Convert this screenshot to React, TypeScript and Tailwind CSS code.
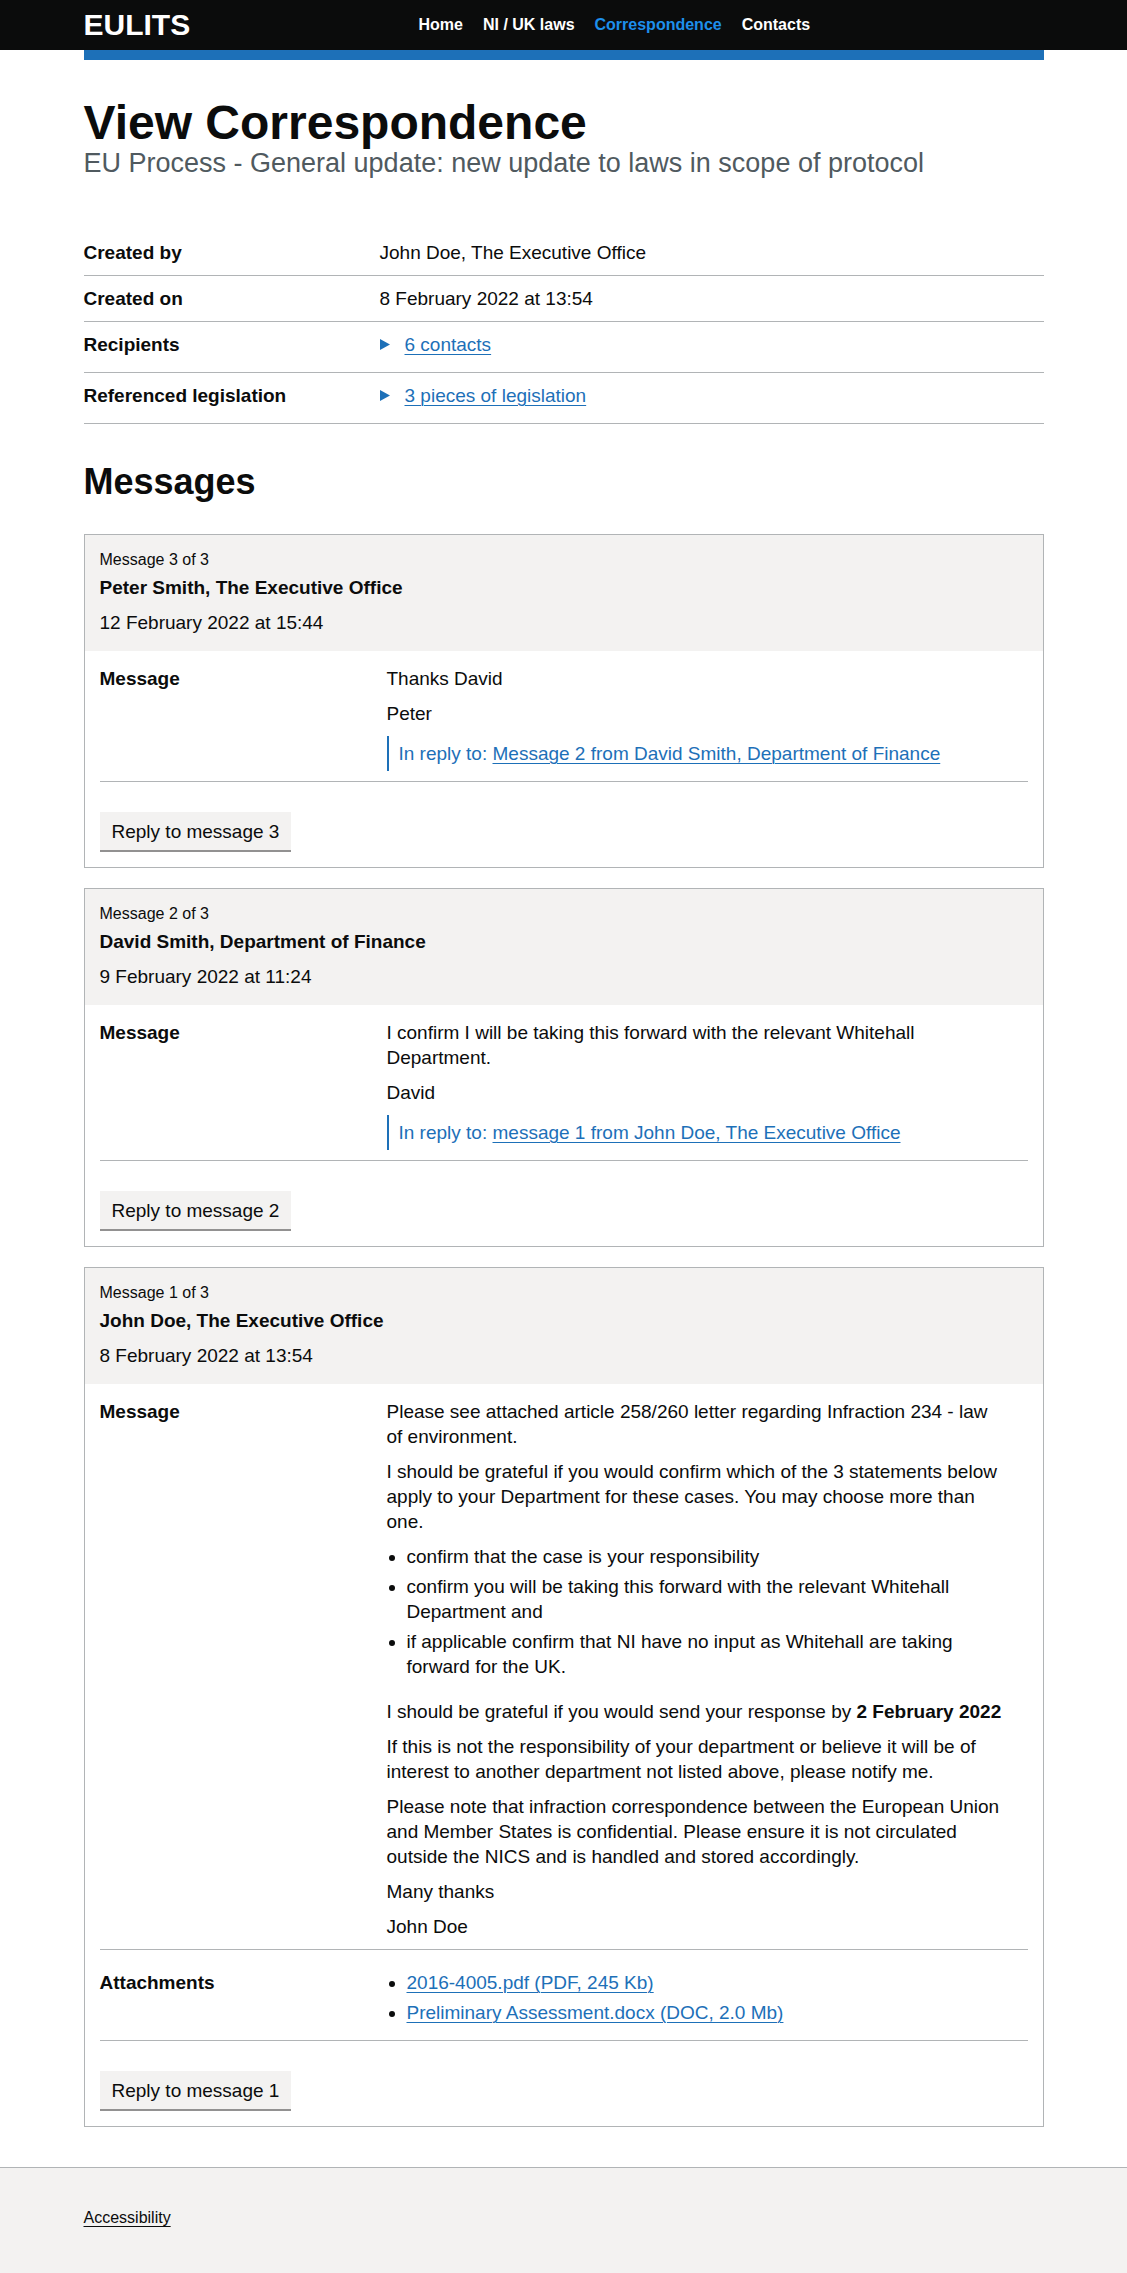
import React from "react";

type Message = {
  number: number;
  author: string;
  date: string;
  body: React.ReactNode;
  replyTo?: string;
  attachments?: string[];
};

const navLinks = [
  { label: "Home", active: false },
  { label: "NI / UK laws", active: false },
  { label: "Correspondence", active: true },
  { label: "Contacts", active: false },
];

const linkClass =
  "text-[#1d70b8] underline decoration-1 underline-offset-[3px]";

function Triangle() {
  return (
    <svg width="10" height="11" viewBox="0 0 10 11" className="shrink-0">
      <polygon points="0,0 10,5.5 0,11" fill="#1d70b8" />
    </svg>
  );
}

function SummaryRow({
  label,
  children,
  pb = "pb-[10px]",
}: {
  label: string;
  children: React.ReactNode;
  pb?: string;
}) {
  return (
    <div className={`flex border-b border-[#b1b4b6] pt-[10px] ${pb}`}>
      <div className="w-[296px] shrink-0 font-bold">{label}</div>
      <div className="flex-1">{children}</div>
    </div>
  );
}

function DetailsLink({ text }: { text: string }) {
  return (
    <details>
      <summary className="list-none cursor-pointer flex items-center gap-[15px]">
        <Triangle />
        <span className={linkClass}>{text}</span>
      </summary>
    </details>
  );
}

const messages: Message[] = [
  {
    number: 3,
    author: "Peter Smith, The Executive Office",
    date: "12 February 2022 at 15:44",
    body: (
      <>
        <p className="mb-[10px]">Thanks David</p>
        <p className="mb-[10px]">Peter</p>
      </>
    ),
    replyTo: "Message 2 from David Smith, Department of Finance",
  },
  {
    number: 2,
    author: "David Smith, Department of Finance",
    date: "9 February 2022 at 11:24",
    body: (
      <>
        <p className="mb-[10px]">
          I confirm I will be taking this forward with the relevant Whitehall
          Department.
        </p>
        <p className="mb-[10px]">David</p>
      </>
    ),
    replyTo: "message 1 from John Doe, The Executive Office",
  },
  {
    number: 1,
    author: "John Doe, The Executive Office",
    date: "8 February 2022 at 13:54",
    body: (
      <>
        <p className="mb-[10px]">
          Please see attached article 258/260 letter regarding Infraction 234 -
          law of environment.
        </p>
        <p className="mb-[10px]">
          I should be grateful if you would confirm which of the 3 statements
          below apply to your Department for these cases. You may choose more
          than one.
        </p>
        <ul className="list-disc pl-[20px] mb-[20px]">
          <li className="mb-[5px]">confirm that the case is your responsibility</li>
          <li className="mb-[5px]">
            confirm you will be taking this forward with the relevant Whitehall
            Department and
          </li>
          <li className="mb-[5px]">
            if applicable confirm that NI have no input as Whitehall are taking
            forward for the UK.
          </li>
        </ul>
        <p className="mb-[10px]">
          I should be grateful if you would send your response by{" "}
          <strong className="font-bold">2 February 2022</strong>
        </p>
        <p className="mb-[10px]">
          If this is not the responsibility of your department or believe it
          will be of interest to another department not listed above, please
          notify me.
        </p>
        <p className="mb-[10px]">
          Please note that infraction correspondence between the European Union
          and Member States is confidential. Please ensure it is not circulated
          outside the NICS and is handled and stored accordingly.
        </p>
        <p className="mb-[10px]">Many thanks</p>
        <p>John Doe</p>
      </>
    ),
    attachments: [
      "2016-4005.pdf (PDF, 245 Kb)",
      "Preliminary Assessment.docx (DOC, 2.0 Mb)",
    ],
  },
];

function MessageCard({ message }: { message: Message }) {
  return (
    <div className="border border-[#b1b4b6] mb-[20px]">
      <div className="bg-[#f3f2f1] px-[15px] pt-[15px] pb-[16px]">
        <div className="text-[16px] leading-[20px] mb-[5px]">
          Message {message.number} of 3
        </div>
        <div className="font-bold mb-[10px]">{message.author}</div>
        <div>{message.date}</div>
      </div>
      <div className="px-[15px]">
        <div className="flex border-b border-[#b1b4b6] pt-[15px] pb-[10px]">
          <div className="w-[287px] shrink-0 font-bold">Message</div>
          <div className="w-[618px]">
            {message.body}
            {message.replyTo && (
              <div className="border-l-2 border-[#1d70b8] pl-[10px] py-[5px] text-[#1d70b8]">
                In reply to: <a href="#" className={linkClass}>{message.replyTo}</a>
              </div>
            )}
          </div>
        </div>
        {message.attachments && (
          <div className="flex border-b border-[#b1b4b6] pt-[20px] pb-[10px]">
            <div className="w-[287px] shrink-0 font-bold">Attachments</div>
            <ul className="w-[618px] list-disc pl-[20px]">
              {message.attachments.map((a) => (
                <li key={a} className="mb-[5px]">
                  <a href="#" className={linkClass}>{a}</a>
                </li>
              ))}
            </ul>
          </div>
        )}
        <button className="mt-[30px] mb-[17px] bg-[#f3f2f1] border-2 border-transparent pt-[8px] pb-[7px] px-[10px] text-[19px] leading-[19px] text-[#0b0c0c] shadow-[0_2px_0_#929191]">
          Reply to message {message.number}
        </button>
      </div>
    </div>
  );
}

export default function App() {
  return (
    <div className="min-h-screen flex flex-col bg-white text-[#0b0c0c] text-[19px] leading-[25px] font-['Liberation_Sans',Arial,sans-serif]">
      <header className="bg-[#0b0c0c] h-[50px]">
        <div className="w-[960px] mx-auto h-full flex items-center">
          <div className="w-[335px] shrink-0 text-white font-bold text-[30px] leading-[30px]">
            EULITS
          </div>
          <nav className="flex gap-[20px] text-[16px] leading-[20px] font-bold">
            {navLinks.map((l) => (
              <a
                key={l.label}
                href="#"
                className={l.active ? "text-[#1d8feb]" : "text-white"}
              >
                {l.label}
              </a>
            ))}
          </nav>
        </div>
      </header>
      <div className="w-[960px] mx-auto h-[10px] bg-[#1d70b8]" />

      <main className="w-[960px] mx-auto pt-[38px] pb-[20px]">
        <h1 className="text-[48px] leading-[50px] font-bold">View Correspondence</h1>
        <div className="text-[27px] leading-[30px] text-[#505a5f]">
          EU Process - General update: new update to laws in scope of protocol
        </div>

        <div className="mt-[52px]">
          <SummaryRow label="Created by">John Doe, The Executive Office</SummaryRow>
          <SummaryRow label="Created on">8 February 2022 at 13:54</SummaryRow>
          <SummaryRow label="Recipients" pb="pb-[15px]">
            <DetailsLink text="6 contacts" />
          </SummaryRow>
          <SummaryRow label="Referenced legislation" pb="pb-[15px]">
            <DetailsLink text="3 pieces of legislation" />
          </SummaryRow>
        </div>

        <h2 className="mt-[38px] mb-[32px] text-[36px] leading-[40px] font-bold">Messages</h2>

        {messages.map((m) => (
          <MessageCard key={m.number} message={m} />
        ))}
      </main>

      <footer className="flex-1 border-t border-[#b1b4b6] bg-[#f3f2f1] pt-[40px] pb-[40px]">
        <div className="w-[960px] mx-auto text-[16px] leading-[20px]">
          <a href="#" className="underline decoration-1 underline-offset-[3px] text-[#0b0c0c]">
            Accessibility
          </a>
        </div>
      </footer>
    </div>
  );
}
